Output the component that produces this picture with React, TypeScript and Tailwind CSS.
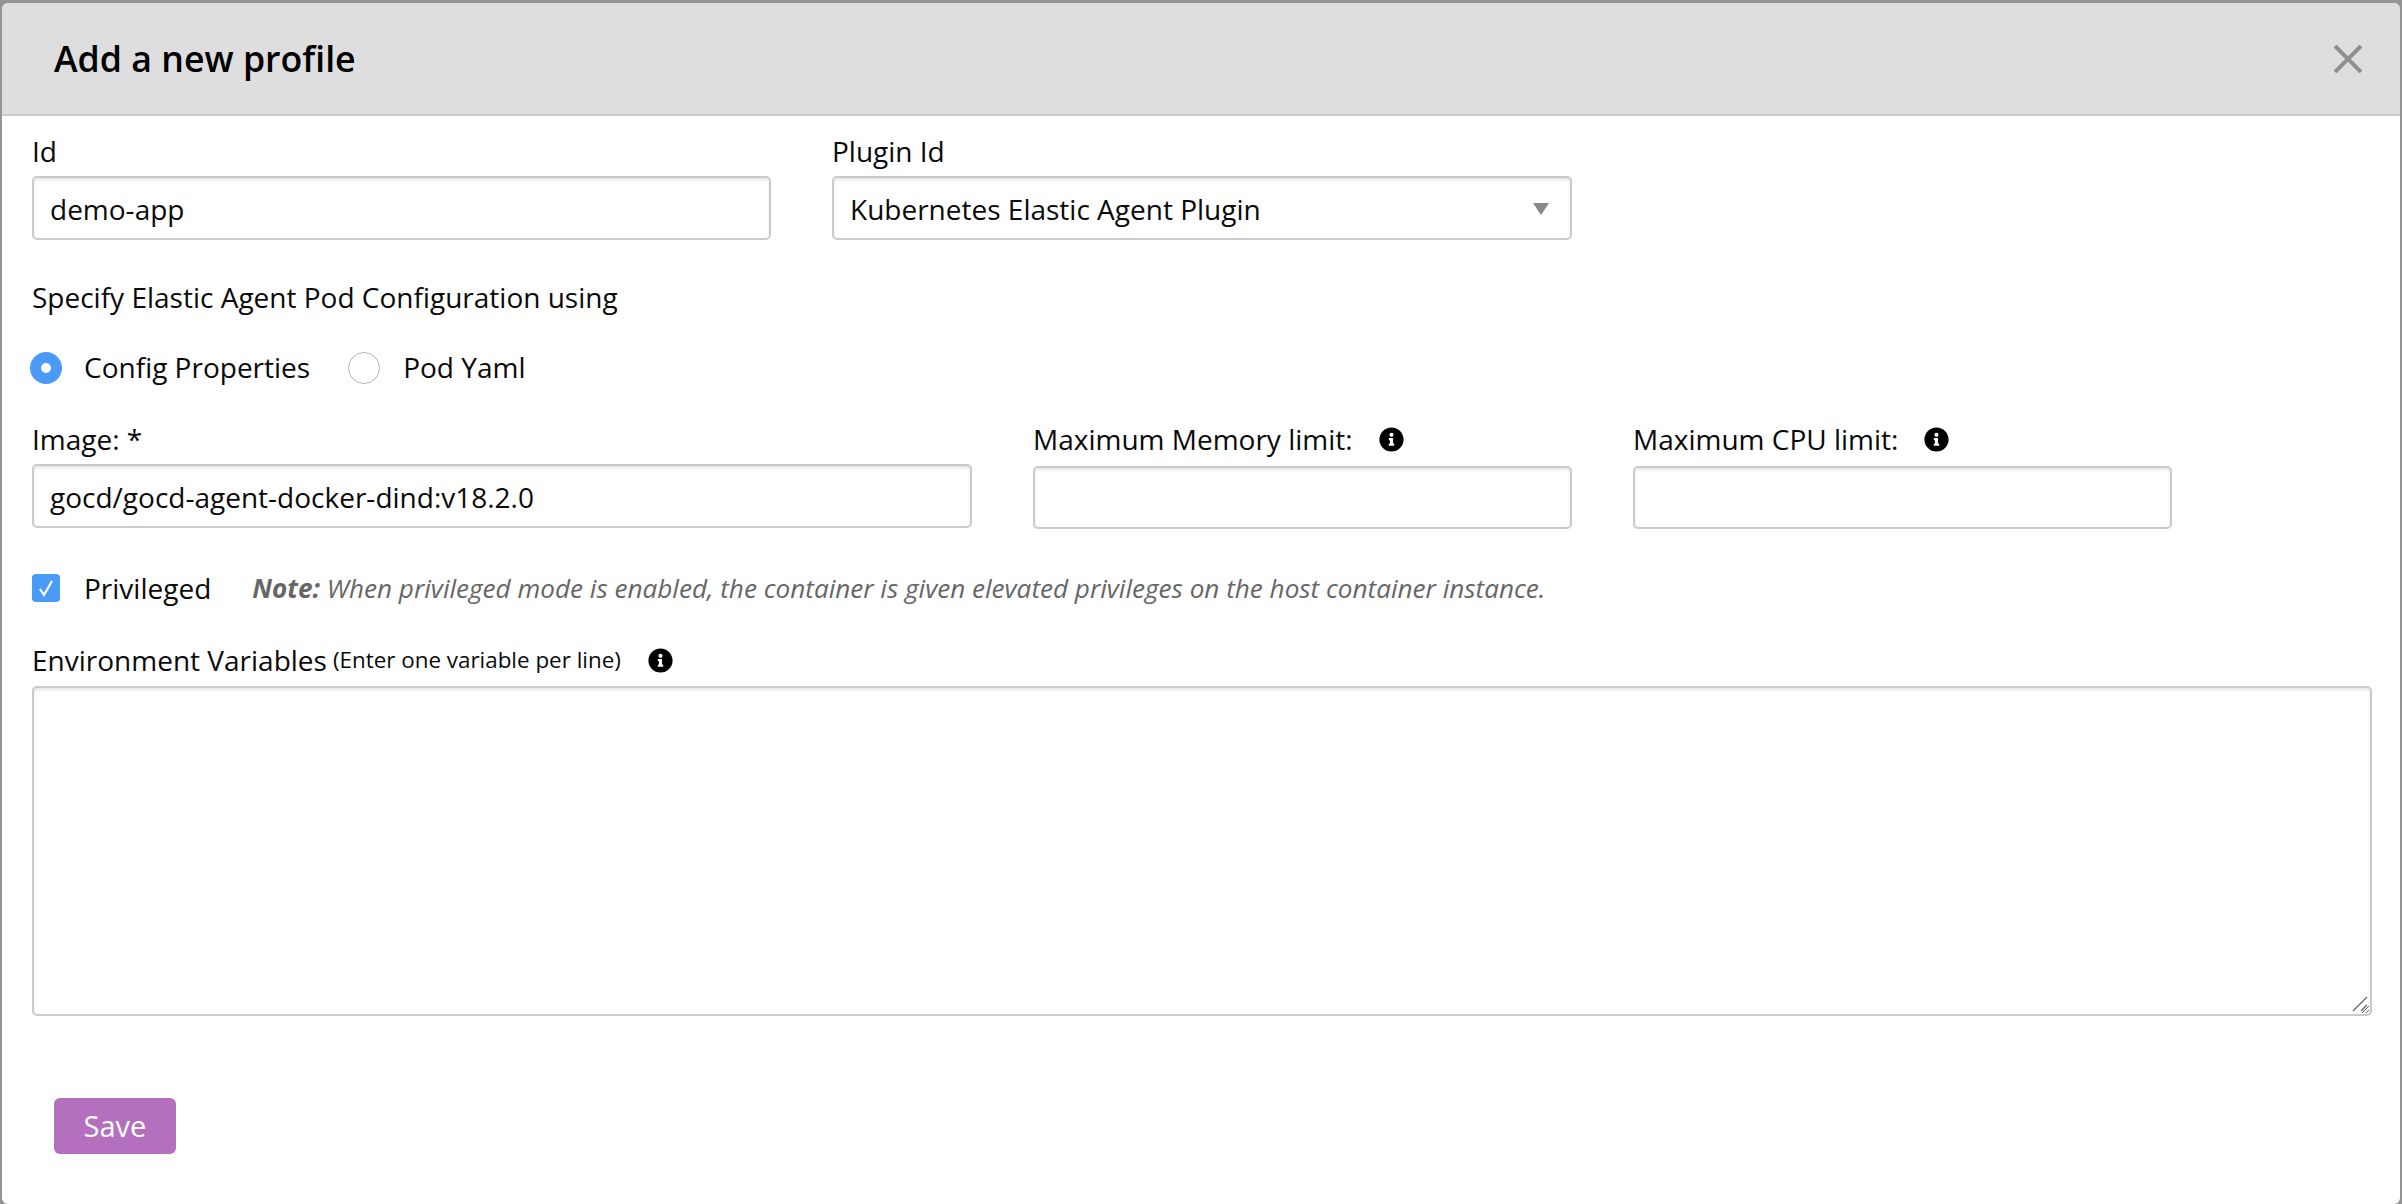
import React from 'react';
import { FaInfoCircle } from 'react-icons/fa';

const inputClass =
  'block h-[64px] w-full rounded-[5px] border-2 border-[#cacaca] bg-white px-[16px] pt-[2px] text-[28px] text-[#0a0a0a] shadow-[inset_0_2px_3px_rgba(10,10,10,0.1)] outline-none';

const Info = () => <FaInfoCircle size={25} className="shrink-0 text-black" />;

const App: React.FC = () => {
  return (
    <div className="h-screen w-full overflow-hidden bg-[#949494] pt-[3px] pl-[2px] pr-[2px] font-['Open_Sans',sans-serif] text-[#0a0a0a]">
      <div className="flex h-full flex-col overflow-hidden rounded-[6px] bg-white">
        {/* Header */}
        <div className="flex h-[113px] shrink-0 items-center justify-between border-b-2 border-[#cccccc] bg-[#dedede] pl-[52px] pr-[38px]">
          <h2 className="text-[35.7px] font-semibold text-black">Add a new profile</h2>
          <button className="text-[#8f8f8f]">
            <svg width="28" height="28" viewBox="0 0 28 28" stroke="currentColor" strokeWidth="4" className="block">
              <path d="M1 1 L27 27 M27 1 L1 27" />
            </svg>
          </button>
        </div>

        <div className="flex flex-1 flex-col pl-[30px] pr-[28px] pt-[12px]">
          {/* Id + plugin */}
          <div className="flex gap-[61px]">
            <div className="w-[739px]">
              <label className="block h-[48px] text-[28px] leading-[46px]">Id</label>
              <input className={inputClass} defaultValue="demo-app" />
            </div>
            <div className="w-[740px]">
              <label className="block h-[48px] text-[28px] leading-[46px]">Plugin Id</label>
              <div className="relative">
                <select className={`${inputClass} appearance-none`} defaultValue="k8s">
                  <option value="k8s">Kubernetes Elastic Agent Plugin</option>
                </select>
                <div className="absolute right-[23px] top-[27px] h-0 w-0 border-x-[8px] border-t-[12px] border-x-transparent border-t-[#888888]" />
              </div>
            </div>
          </div>

          <p className="mt-[37px] text-[28px] leading-[40px]">Specify Elastic Agent Pod Configuration using</p>

          {/* Radios */}
          <div className="mt-[35px] flex h-[32px] items-center text-[28px]">
            <span className="-ml-[2px] flex h-[32px] w-[32px] items-center justify-center rounded-full bg-[#4a9bf7]">
              <span className="h-[10px] w-[10px] rounded-full bg-white" />
            </span>
            <span className="ml-[22px] pb-[2px]">Config Properties</span>
            <span className="ml-[38px] h-[32px] w-[32px] rounded-full border border-[#b5b5b5] bg-white" />
            <span className="ml-[23px] pb-[2px]">Pod Yaml</span>
          </div>

          {/* Image + limits */}
          <div className="mt-[35px] flex gap-[61px]">
            <div className="w-[940px]">
              <label className="block h-[45px] text-[28px] leading-[40px]">Image: *</label>
              <input className={inputClass} defaultValue="gocd/gocd-agent-docker-dind:v18.2.0" />
            </div>
            <div className="w-[539px]">
              <label className="flex h-[47px] items-start gap-[26px] text-[28px] leading-[40px]">
                Maximum Memory limit:
                <span className="pt-[8px]"><Info /></span>
              </label>
              <input className={`${inputClass} !h-[63px]`} />
            </div>
            <div className="w-[539px]">
              <label className="flex h-[47px] items-start gap-[26px] text-[28px] leading-[40px]">
                Maximum CPU limit:
                <span className="pt-[8px]"><Info /></span>
              </label>
              <input className={`${inputClass} !h-[63px]`} />
            </div>
          </div>

          {/* Privileged */}
          <div className="mt-[45px] flex h-[28px] items-center text-[28px]">
            <span className="flex h-[28px] w-[28px] items-center justify-center rounded-[4px] bg-[#4a9bf7]">
              <svg width="16" height="18" viewBox="0 0 16 18" fill="none" stroke="white" strokeWidth="2.2" className="block">
                <path d="M2 10 L6 16 L14 2" />
              </svg>
            </span>
            <span className="ml-[24px]">Privileged</span>
            <span className="ml-[41px] pt-[1px] text-[26.12px] italic text-[#666666]">
              <b className="font-bold">Note:</b> When privileged mode is enabled, the container is given elevated privileges on the host container instance.
            </span>
          </div>

          {/* Environment variables */}
          <div className="mt-[38px] flex h-[46px] items-start text-[28px] leading-[40px]">
            Environment Variables
            <span className="ml-[6px] text-[22.4px]">(Enter one variable per line)</span>
            <span className="ml-[27px] pt-[8px]"><Info /></span>
          </div>
          <div className="relative">
            <textarea className="block h-[330px] w-full rounded-[5px] border-2 border-[#cacaca] bg-white p-[16px] shadow-[inset_0_2px_3px_rgba(10,10,10,0.1)] outline-none" />
            <svg width="16" height="16" viewBox="0 0 16 16" stroke="#666666" strokeWidth="1.4" className="pointer-events-none absolute bottom-[4px] right-[4px]">
              <path d="M1 15 L15 1 M9 15 L15 9" />
            </svg>
          </div>

          {/* Footer */}
          <div className="mt-[82px] pl-[22px]">
            <button className="h-[56px] w-[122px] rounded-[6px] bg-[#b46fbf] text-[29px] font-medium text-white">Save</button>
          </div>
        </div>
      </div>
    </div>
  );
};

export default App;
